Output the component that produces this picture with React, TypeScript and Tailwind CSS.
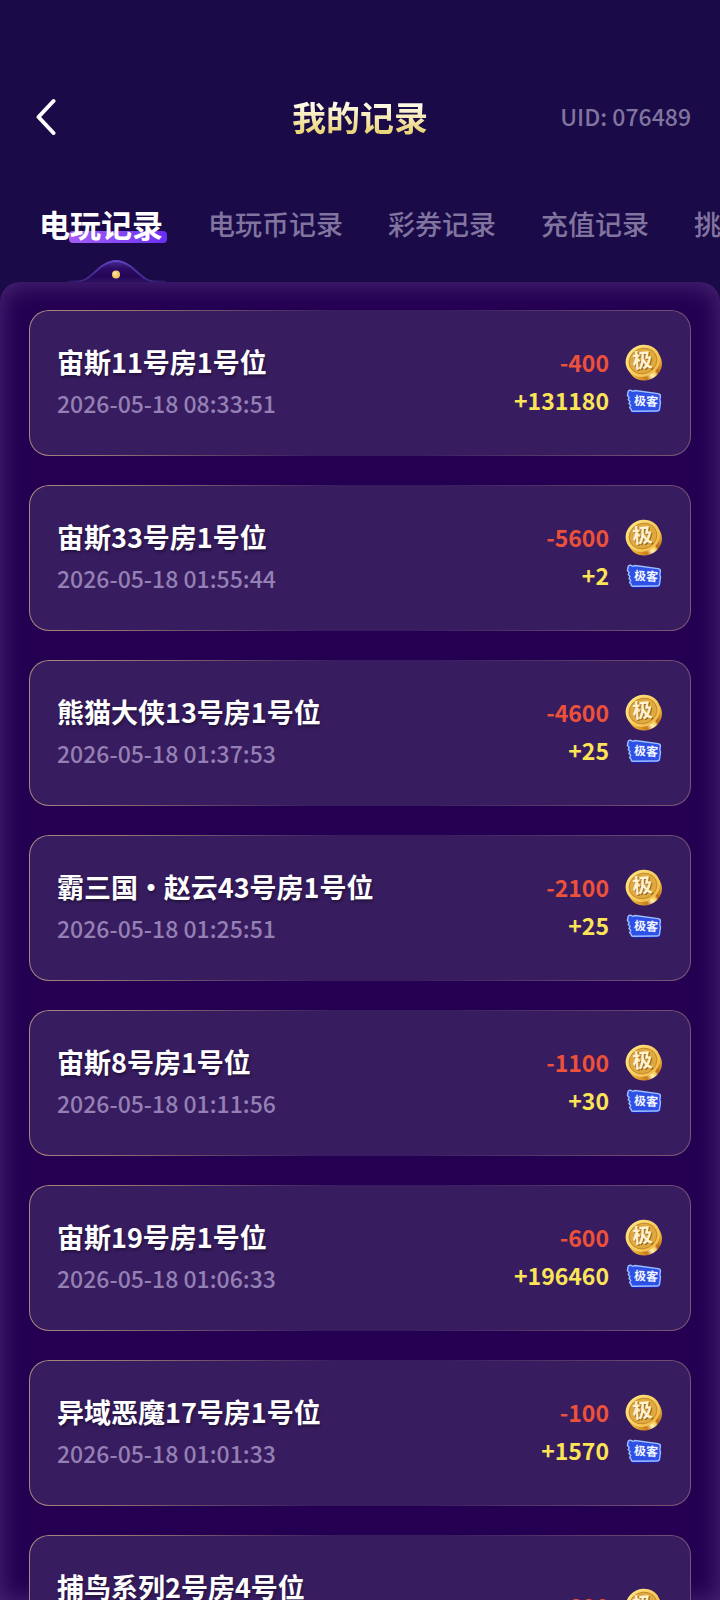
import { useState } from "react";

interface PlayRecord {
  id: number;
  title: string;
  time: string;
  cost: string;
  reward?: string;
}

const TABS = ["电玩记录", "电玩币记录", "彩券记录", "充值记录", "挑战记录"];

const RECORDS: PlayRecord[] = [
  { id: 1, title: "宙斯11号房1号位", time: "2026-05-18 08:33:51", cost: "-400", reward: "+131180" },
  { id: 2, title: "宙斯33号房1号位", time: "2026-05-18 01:55:44", cost: "-5600", reward: "+2" },
  { id: 3, title: "熊猫大侠13号房1号位", time: "2026-05-18 01:37:53", cost: "-4600", reward: "+25" },
  { id: 4, title: "霸三国 · 赵云43号房1号位", time: "2026-05-18 01:25:51", cost: "-2100", reward: "+25" },
  { id: 5, title: "宙斯8号房1号位", time: "2026-05-18 01:11:56", cost: "-1100", reward: "+30" },
  { id: 6, title: "宙斯19号房1号位", time: "2026-05-18 01:06:33", cost: "-600", reward: "+196460" },
  { id: 7, title: "异域恶魔17号房1号位", time: "2026-05-18 01:01:33", cost: "-100", reward: "+1570" },
  { id: 8, title: "捕鸟系列2号房4号位", time: "2026-05-18 00:56:12", cost: "-600" },
];

function CoinIcon() {
  return (
    <svg width="38" height="38" viewBox="0 -1 38 38" aria-hidden="true">
      <defs>
        <linearGradient id="coinEdge" x1="0" y1="0.6" x2="1" y2="0.5">
          <stop offset="0" stopColor="#f0b83a" />
          <stop offset="0.35" stopColor="#c87a1c" />
          <stop offset="0.5" stopColor="#fff0b4" />
          <stop offset="0.62" stopColor="#fbd564" />
          <stop offset="0.7" stopColor="#b8691a" />
          <stop offset="1" stopColor="#f0b83a" />
        </linearGradient>
        <linearGradient id="coinFace" x1="0" y1="0" x2="0.6" y2="1">
          <stop offset="0" stopColor="#ffe987" />
          <stop offset="1" stopColor="#f3bd48" />
        </linearGradient>
      </defs>
      <ellipse cx="20" cy="20.5" rx="17.2" ry="15.8" transform="rotate(-25 20 20.5)" fill="url(#coinEdge)" />
      <ellipse cx="17.8" cy="16.8" rx="17.5" ry="15.8" transform="rotate(-25 17.8 16.8)" fill="url(#coinFace)" />
      <ellipse cx="18" cy="17" rx="14.2" ry="12.6" transform="rotate(-25 18 17)" fill="#e0a940" stroke="#bd8429" strokeWidth="0.8" />
      <text x="8.500" y="24.500" fontSize="20" fontWeight="700" fill="#94601a" transform="rotate(-4 18 17)">
        极
      </text>
      <text x="7.500" y="23.500" fontSize="20" fontWeight="700" fill="#fff3d4" transform="rotate(-4 18 17)">
        极
      </text>
    </svg>
  );
}

function TicketIcon() {
  return (
    <svg width="38" height="30" viewBox="0 -4 38 30" aria-hidden="true">
      <path
        d="M5 3L35 7Q37 7.300 36.600 9.300L36 13L36.400 15L35.600 21.500Q35.300 23.500 33.500 23.500L9 24.500Q6 24.500 6 21Z"
        fill="#1a22b8"
      />
      <path
        d="M3 3.500Q3 1 5.500 1.200L8 2.300L10 1.500L33 4.600Q35.700 5 35.400 7.300L34.800 11L35.500 13L34.500 20Q34.200 22 32 22L8 22.300Q6 22.300 6.200 20.300L4.600 18.500L5.800 16.500L4 14.500L5 12.500L3.200 10.500L4.200 8.500L2.400 6.500Z"
        fill="#2f50e6"
        stroke="#9cc0ff"
        strokeWidth="1.400"
        strokeLinejoin="round"
      />
      <text x="9" y="16.500" fontSize="12" fontWeight="700" fill="#f2f6ff" transform="rotate(4 20 12)">
        极客
      </text>
    </svg>
  );
}

function RecordCard({ record }: { record: PlayRecord }) {
  return (
    <li className="shrink-0 rounded-[20px] bg-[linear-gradient(100deg,#a98980_0%,#987573_14%,#371c60_45%,#371c60_60%,#7d5875_100%)] p-px">
      <div className="flex justify-between gap-4 rounded-[19px] bg-[#371c60] px-[27px] pt-[30px] pb-8">
        <div className="min-w-0">
          <h2 className="truncate text-[27px] leading-[42px] font-bold text-white [font-feature-settings:'halt'] [text-shadow:1px_2px_3px_rgba(0,0,0,0.4)]">
            {record.title}
          </h2>
          <time className="block text-[23px] leading-[40px] font-medium text-[#9580b4]">{record.time}</time>
        </div>
        <div className="flex shrink-0 flex-col justify-center pb-0.5 text-[23px] font-bold">
          <div className="flex h-[38px] items-center justify-end gap-4 text-[#ec5139]">
            <span>{record.cost}</span>
            <CoinIcon />
          </div>
          {record.reward && (
            <div className="flex h-[38px] items-center justify-end gap-4 text-[#fce457]">
              <span>{record.reward}</span>
              <TicketIcon />
            </div>
          )}
        </div>
      </div>
    </li>
  );
}

export default function App() {
  const [activeTab, setActiveTab] = useState(TABS[0]);

  return (
    <div className="flex h-screen flex-col overflow-hidden bg-[#1a0a47] pt-20 font-['Noto_Sans_CJK_SC',sans-serif]">
      <header className="grid h-[72px] shrink-0 grid-cols-[1fr_auto_1fr] items-center px-[29px]">
        <button type="button" aria-label="返回" className="w-8 pl-1.5">
          <svg width="22" height="38" viewBox="0 0 22 38" fill="none" aria-hidden="true">
            <path
              d="M18.500 4L3.500 20L18.500 36"
              stroke="#fff"
              strokeWidth="4"
              strokeLinecap="round"
              strokeLinejoin="round"
            />
          </svg>
        </button>
        <h1 className="bg-linear-to-b from-[#fffbe8] from-25% to-[#ead57a] to-80% bg-clip-text text-[34px] font-bold text-transparent">
          我的记录
        </h1>
        <span className="text-right text-[23px] font-medium text-[#8175a0]">UID: 076489</span>
      </header>

      <nav className="mt-9 flex h-[72px] shrink-0 items-center gap-[45px] overflow-x-auto pr-8 pl-[39px] [scrollbar-width:none]">
        {TABS.map((tab) => (
          <button
            key={tab}
            type="button"
            onClick={() => setActiveTab(tab)}
            className={
              tab === activeTab
                ? "relative shrink-0 text-[31px] font-bold text-white"
                : "shrink-0 text-[27px] font-medium text-[#8175a0]"
            }
          >
            {tab === activeTab && (
              <span className="absolute -right-1 bottom-1 left-[30px] h-3 rounded-sm bg-linear-to-r from-[#a75cf5] to-[#6a2df5]" />
            )}
            <span className="relative">{tab}</span>
          </button>
        ))}
      </nav>

      <svg className="ml-[68px] shrink-0" width="98" height="22" viewBox="0 0 98 22" aria-hidden="true">
        <defs>
          <linearGradient id="bump" x1="0" y1="0" x2="0" y2="1">
            <stop offset="0" stopColor="#4a2a92" />
            <stop offset="0.35" stopColor="#2d0d64" />
            <stop offset="0.75" stopColor="#240556" />
            <stop offset="1" stopColor="#301365" />
          </linearGradient>
          <linearGradient id="bumpLine" x1="0" y1="0" x2="1" y2="0">
            <stop offset="0" stopColor="#5a3fb8" stopOpacity="0.2" />
            <stop offset="0.5" stopColor="#6146c8" />
            <stop offset="1" stopColor="#5a3fb8" stopOpacity="0.2" />
          </linearGradient>
        </defs>
        <path
          d="M0 21.500H9C19 21.500 25 13 34 6C43 -.6 53 -.6 62 6C71 13 77 21.500 87 21.500H98"
          fill="url(#bump)"
          stroke="url(#bumpLine)"
          strokeWidth="2"
        />
        <circle cx="48" cy="14.500" r="4" fill="#f3c566" />
        <circle cx="47" cy="13.500" r="2" fill="#fde3a0" />
      </svg>

      <main className="min-h-0 flex-1 overflow-y-auto rounded-t-[20px] bg-[#250052] px-[29px] py-7 shadow-[inset_0_2px_24px_#4b2a78] [scrollbar-width:none]">
        <ul className="flex flex-col gap-[29px]">
          {RECORDS.map((record) => (
            <RecordCard key={record.id} record={record} />
          ))}
        </ul>
      </main>
    </div>
  );
}
